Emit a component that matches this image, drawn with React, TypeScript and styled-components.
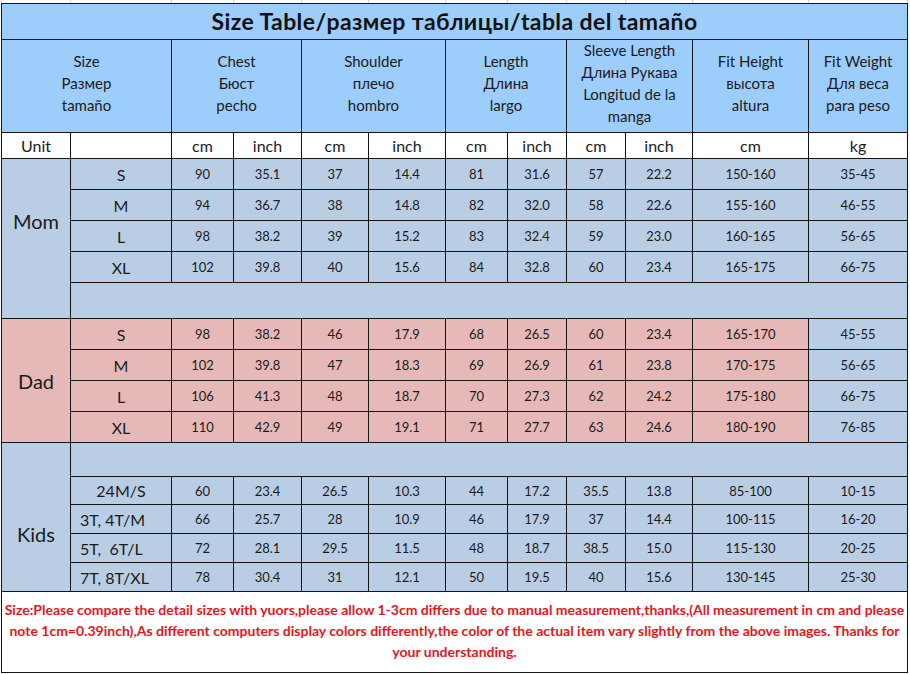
import React from "react";
import styled, { createGlobalStyle } from "styled-components";

const Global = createGlobalStyle`
  html, body { margin: 0; padding: 0; background: #ffffff; }
  body { font-family: Lato, "Open Sans", "Liberation Sans", sans-serif; color: #1b1b1b; }
`;

const COLS = "68px 100px 61px 67px 66px 76px 61px 58px 58px 66px 115px 98px";
const ROWS = "35px 92px 25px 30px 30px 30px 30px 35px 30px 30px 30px 30px 33px 27px 28px 28px 28px 80px";

const BLUE_HEAD = "#9dcdfb";
const BLUE_BODY = "#b9cde4";
const PINK = "#e6b9b8";

const Page = styled.div`
  width: 910px;
  height: 674px;
  padding-left: 1px;
  box-sizing: border-box;
  overflow: hidden;
`;

const Strip = styled.div`
  display: grid;
  grid-template-columns: ${COLS};
  column-gap: 1px;
  padding: 0 1px;
  width: 907px;
  box-sizing: border-box;
  height: 3px;
  background: #d6d6d6;
  & > div { background: #ffffff; }
`;

const Sheet = styled.div`
  display: grid;
  grid-template-columns: ${COLS};
  grid-template-rows: ${ROWS};
  gap: 1px;
  padding: 1px;
  width: 907px;
  box-sizing: border-box;
  background: #141414;
`;

const Cell = styled.div<{
  $bg?: string;
  $span?: number;
  $rows?: number;
  $size?: number;
  $align?: "center" | "left";
}>`
  background: ${(p) => p.$bg || BLUE_BODY};
  grid-column: span ${(p) => p.$span || 1};
  grid-row: span ${(p) => p.$rows || 1};
  display: flex;
  align-items: center;
  justify-content: ${(p) => (p.$align === "left" ? "flex-start" : "center")};
  padding-left: ${(p) => (p.$align === "left" ? "9px" : "0")};
  font-size: ${(p) => p.$size || 13}px;
  white-space: pre;
  overflow: hidden;
  box-sizing: border-box;
`;

const GroupLabel = styled(Cell)<{ $shiftTop?: number; $shiftBottom?: number }>`
  font-size: 20px;
  padding-top: ${(p) => p.$shiftTop || 0}px;
  padding-bottom: ${(p) => p.$shiftBottom || 0}px;
`;

const Title = styled(Cell)`
  font-weight: 700;
  font-size: 23px;
  letter-spacing: 0.4px;
  padding-bottom: 2px;
  color: #111;
`;

const HeadCell = styled(Cell)`
  flex-direction: column;
  font-size: 15px;
  line-height: 22px;
  text-align: center;
  padding-bottom: 7px;
`;

const Footer = styled.div`
  grid-column: span 12;
  background: #ffffff;
  color: #e3161d;
  font-weight: 700;
  font-size: 14px;
  line-height: 21px;
  text-align: center;
  padding-top: 7px;
  box-sizing: border-box;
`;

const FootLine = styled.span`
  display: block;
  white-space: nowrap;
`;

type Row = [string, string, string, string, string, string, string, string, string, string, string];

const mom: Row[] = [
  ["S", "90", "35.1", "37", "14.4", "81", "31.6", "57", "22.2", "150-160", "35-45"],
  ["M", "94", "36.7", "38", "14.8", "82", "32.0", "58", "22.6", "155-160", "46-55"],
  ["L", "98", "38.2", "39", "15.2", "83", "32.4", "59", "23.0", "160-165", "56-65"],
  ["XL", "102", "39.8", "40", "15.6", "84", "32.8", "60", "23.4", "165-175", "66-75"],
];

const dad: Row[] = [
  ["S", "98", "38.2", "46", "17.9", "68", "26.5", "60", "23.4", "165-170", "45-55"],
  ["M", "102", "39.8", "47", "18.3", "69", "26.9", "61", "23.8", "170-175", "56-65"],
  ["L", "106", "41.3", "48", "18.7", "70", "27.3", "62", "24.2", "175-180", "66-75"],
  ["XL", "110", "42.9", "49", "19.1", "71", "27.7", "63", "24.6", "180-190", "76-85"],
];

const kids: Row[] = [
  ["24M/S", "60", "23.4", "26.5", "10.3", "44", "17.2", "35.5", "13.8", "85-100", "10-15"],
  ["3T, 4T/M", "66", "25.7", "28", "10.9", "46", "17.9", "37", "14.4", "100-115", "16-20"],
  ["5T,  6T/L", "72", "28.1", "29.5", "11.5", "48", "18.7", "38.5", "15.0", "115-130", "20-25"],
  ["7T, 8T/XL", "78", "30.4", "31", "12.1", "50", "19.5", "40", "15.6", "130-145", "25-30"],
];

const headers: { lines: string[]; span: number }[] = [
  { lines: ["Size", "Размер", "tamaño"], span: 2 },
  { lines: ["Chest", "Бюст", "pecho"], span: 2 },
  { lines: ["Shoulder", "плечо", "hombro"], span: 2 },
  { lines: ["Length", "Длина", "largo"], span: 2 },
  { lines: ["Sleeve Length", "Длина Рукава", "Longitud de la", "manga"], span: 2 },
  { lines: ["Fit Height", "высота", "altura"], span: 1 },
  { lines: ["Fit Weight", "Для веса", "para peso"], span: 1 },
];

const units = ["cm", "inch", "cm", "inch", "cm", "inch", "cm", "inch", "cm", "kg"];

function DataRow({ row, bg, lastBg, sizeAlign }: { row: Row; bg: string; lastBg?: string; sizeAlign?: "center" | "left" }) {
  return (
    <>
      <Cell $bg={bg} $size={16} $align={sizeAlign}>
        {row[0]}
      </Cell>
      {row.slice(1).map((v, i) => (
        <Cell key={i} $bg={i === 9 && lastBg ? lastBg : bg}>
          {v}
        </Cell>
      ))}
    </>
  );
}

export default function App() {
  return (
    <Page>
      <Global />
      <Strip>
        {Array.from({ length: 12 }).map((_, i) => (
          <div key={i} />
        ))}
      </Strip>
      <Sheet>
        <Title $bg={BLUE_HEAD} $span={12}>
          Size Table/размер таблицы/tabla del tamaño
        </Title>

        {headers.map((h, i) => (
          <HeadCell key={i} $bg={BLUE_HEAD} $span={h.span}>
            {h.lines.map((l, j) => (
              <span key={j}>{l}</span>
            ))}
          </HeadCell>
        ))}

        <Cell $bg="#ffffff" $size={16}>
          Unit
        </Cell>
        <Cell $bg="#ffffff" />
        {units.map((u, i) => (
          <Cell key={i} $bg="#ffffff" $size={16}>
            {u}
          </Cell>
        ))}

        <GroupLabel $rows={5} $shiftBottom={36}>
          Mom
        </GroupLabel>
        {mom.map((r, i) => (
          <DataRow key={i} row={r} bg={BLUE_BODY} />
        ))}
        <Cell $span={11} />

        <GroupLabel $rows={4} $bg={PINK}>
          Dad
        </GroupLabel>
        {dad.map((r, i) => (
          <DataRow key={i} row={r} bg={PINK} lastBg={BLUE_BODY} />
        ))}

        <GroupLabel $rows={5} $shiftTop={34}>
          Kids
        </GroupLabel>
        <Cell $span={11} />
        {kids.map((r, i) => (
          <DataRow key={i} row={r} bg={BLUE_BODY} sizeAlign={i === 0 ? "center" : "left"} />
        ))}

        <Footer>
          <FootLine>
            Size:Please compare the detail sizes with yuors,please allow 1-3cm differs due to manual measurement,thanks,(All measurement in cm and please
          </FootLine>
          <FootLine>
            note 1cm=0.39inch),As different computers display colors differently,the color of the actual item vary slightly from the above images. Thanks for
          </FootLine>
          <FootLine>your understanding.</FootLine>
        </Footer>
      </Sheet>
    </Page>
  );
}
